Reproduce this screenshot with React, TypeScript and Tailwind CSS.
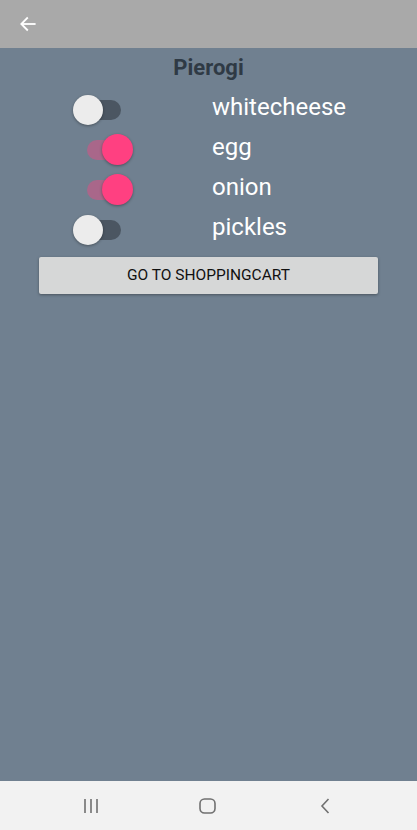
import type { ReactNode } from "react";

const items = [
  { name: "whitecheese", on: false },
  { name: "egg", on: true },
  { name: "onion", on: true },
  { name: "pickles", on: false },
];

function Toggle({ on }: { on: boolean }) {
  if (on) {
    return (
      <div className="relative ml-[87px] h-[20px] w-[38px] rounded-full bg-[#ff4081]/40">
        <div className="absolute left-[15px] top-[-6px] h-[31px] w-[31px] rounded-full bg-[#ff4081] shadow-[0_1px_3px_rgba(0,0,0,0.35)]" />
      </div>
    );
  }
  return (
    <div className="relative ml-[80px] h-[20px] w-[41px] rounded-full bg-[#4b5662]">
      <div className="absolute left-[-7px] top-[-5px] h-[30px] w-[30px] rounded-full bg-[#ececec] shadow-[0_1px_3px_rgba(0,0,0,0.35)]" />
    </div>
  );
}

function Row({ children, on }: { children: ReactNode; on: boolean }) {
  return (
    <div className="flex h-[40px] items-center">
      <div className="w-[212px]">
        <Toggle on={on} />
      </div>
      <span className="pb-[6px] text-[24px] leading-none text-white">{children}</span>
    </div>
  );
}

export default function App() {
  return (
    <div className="flex h-[830px] w-[417px] flex-col bg-[#708090] font-['Roboto',sans-serif]">
      <div className="flex h-[48px] items-center bg-[#a9a9a9] pl-[18px]">
        <svg width="20" height="20" viewBox="0 0 24 24" fill="none" stroke="white" strokeWidth="2.2" strokeLinecap="square">
          <path d="M20 12H5" />
          <path d="M11 5l-7 7 7 7" />
        </svg>
      </div>
      <div className="flex-1">
        <div className="flex h-[42px] items-center justify-center pb-[4px] text-[22px] font-bold text-[#2f3a45]">
          Pierogi
        </div>
        {items.map((it) => (
          <Row key={it.name} on={it.on}>
            {it.name}
          </Row>
        ))}
        <button className="mx-[39px] mt-[7px] flex h-[37px] w-[339px] items-center justify-center rounded-[2px] bg-[#d6d7d7] text-[15.5px] font-normal text-[#111] shadow-[0_1px_3px_rgba(0,0,0,0.35)]">
          GO TO SHOPPINGCART
        </button>
      </div>
      <div className="flex h-[49px] items-center bg-[#f2f2f2] pl-[32px]">
        <div className="flex w-[117px] justify-center">
          <svg width="16" height="14" viewBox="0 0 16 14" stroke="#707070" strokeWidth="1.6">
            <path d="M2 0v14M8 0v14M14 0v14" />
          </svg>
        </div>
        <div className="flex w-[117px] justify-center">
          <svg width="17" height="16" viewBox="0 0 17 16" fill="none" stroke="#707070" strokeWidth="1.6">
            <rect x="1" y="1" width="15" height="14" rx="4.5" />
          </svg>
        </div>
        <div className="flex w-[117px] justify-center">
          <svg width="10" height="16" viewBox="0 0 10 16" fill="none" stroke="#707070" strokeWidth="1.6">
            <path d="M8.5 1L2 8l6.5 7" />
          </svg>
        </div>
      </div>
    </div>
  );
}
